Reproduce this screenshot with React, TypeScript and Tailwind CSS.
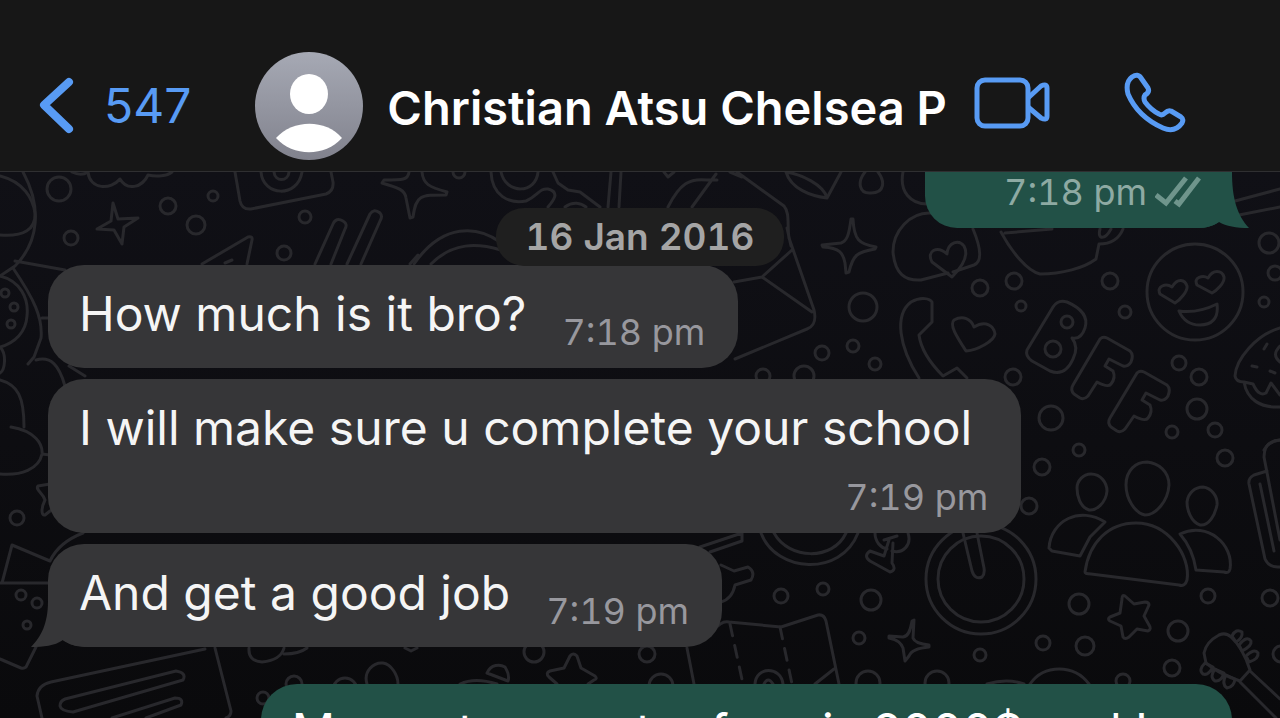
import type { ReactNode } from 'react';
import clsx from 'clsx';

// x, y, radius
const bubbles: [number, number, number][] = [
  [59, 189, 12], [168, 206, 8], [213, 196, 5], [196, 225, 9], [305, 217, 6], [284, 253, 7], [71, 238, 7],
  [459, 172, 6], [863, 307, 14], [822, 353, 7], [853, 346, 6], [875, 364, 6], [804, 376, 10], [763, 376, 7],
  [980, 288, 8], [1014, 281, 8], [1021, 306, 5], [1013, 377, 8], [1110, 281, 8], [1125, 312, 6],
  [1269, 243, 10], [1275, 273, 7], [1264, 302, 5], [1179, 363, 7], [1199, 377, 8], [1051, 418, 12],
  [1197, 409, 10], [1172, 432, 6], [1215, 430, 7], [1079, 450, 6], [1042, 467, 8], [1225, 458, 8],
  [1029, 506, 8], [1079, 604, 10], [1043, 643, 7], [1085, 646, 9], [1208, 596, 7], [1270, 598, 8],
  [1178, 631, 10], [1172, 668, 8], [1281, 654, 8], [1123, 681, 7], [781, 596, 7], [823, 589, 6],
  [871, 600, 10], [859, 638, 6], [980, 655, 6], [868, 683, 12], [937, 683, 12], [17, 518, 7],
  [21, 595, 5], [37, 603, 5], [27, 625, 4], [5, 293, 4], [14, 307, 4], [11, 324, 4],
  [534, 652, 10], [647, 654, 8], [661, 686, 12], [345, 690, 12], [294, 684, 8], [263, 698, 6],
  // clock rims
  [981, 579, 55], [981, 579, 43],
];

const doodles = [
  // planet and pine branches
  'M0 176C24 182 33 199 35 213C36 229 24 237 0 235',
  'M23 172C42 207 39 242 15 266L0 276M15 261L65 270M13 268C34 299 43 318 41 338L34 357L28 364M36 360C51 356 59 365 65 386M42 318H50M69 366L85 376',
  'M0 276C20 281 29 298 27 316C26 332 15 343 0 347M0 347C7 354 5 370 0 373M0 380C18 385 24 397 24 427M11 427C35 431 43 444 42 454C39 469 21 476 0 474M42 454L50 455',
  'M50 484L38 486C35 490 43 493 45 500C41 508 41 516 45 515L50 511M50 561L12 545L2 583M0 583H48M50 561C57 546 70 538 83 533',
  // cloud
  'M72 172C80 176 85 174 88 172C90 190 111 190 120 179C127 191 142 188 148 175C157 177 167 176 172 172',
  // camera
  'M235 172L240 201Q242 210 251 209L326 194Q334 191 333 182L331 172M261 172C263 197 298 198 302 172M274 172C275 182 288 182 289 172',
  // sparkles
  'M113 203L118 219L138 218L124 227L122 244L114 230L97 229L111 221Z',
  'M409 172C408 180 403 180 384 180L382 183C399 188 405 190 406 198L410 218L413 217C416 195 420 195 446 195L447 192C429 187 423 184 422 172',
  'M851 219C849 235 847 241 841 243L822 245L823 247C840 248 843 253 845 263L846 273L849 272C853 255 857 252 875 249L876 247C859 244 854 240 853 219Z',
  'M914 620L913 638C914 641 919 644 929 645V647C916 648 911 651 909 656L905 661L903 648C901 643 898 640 889 638V636L903 637C910 636 911 626 912 621Z',
  // pizza slice
  'M202 264L248 237Q253 236 252 240L247 264M225 263L232 260',
  // drum sticks
  'M315 264L333 224Q336 217 343 221Q348 224 345 229L331 264M347 264L370 214Q374 208 380 213Q383 216 380 221L361 264M410 264L418 255',
  // headphones and jigsaw
  'M414 264C443 222 478 226 500 242M431 264C453 242 477 243 501 250',
  'M491 172C492 196 509 204 526 201C538 196 539 188 548 189C560 192 554 200 548 207M501 172C506 195 536 194 538 172M553 172L558 183L568 190L580 192L600 207M565 207C573 201 581 203 586 207M611 172L608 207M621 172L619 207M664 172L668 177L674 172',
  // envelope
  'M668 207C680 183 690 178 707 180H717M692 207L716 174M737 172L784 206C790 213 787 225 789 238L814 310C817 323 812 327 807 329L735 359M792 250L762 277L734 282M762 277L812 312M791 246L787 228M730 172L742 177',
  // leaf and drop
  'M786 172C791 189 811 196 827 198C824 185 801 174 786 172ZM827 198L841 172M865 172C857 182 859 194 871 193C885 193 885 181 878 172M903 172C899 192 911 204 927 204',
  // cake with a heart
  'M931 213C910 212 893 231 893 252C895 274 905 281 921 280L948 273M973 229C983 253 981 262 974 265L953 272',
  'M952 277L932 262C926 251 937 245 947 254C948 242 959 239 964 246C970 257 960 269 952 277Z',
  // mug
  'M1001 232C1011 251 1027 271 1040 274C1062 274 1084 268 1096 259L1099 244C1111 244 1119 239 1123 229M1005 233L1052 229M1100 229C1097 240 1105 240 1111 229M1235 201L1280 189M1234 216L1280 207',
  // phone handset
  'M932 302V322L919 335C921 350 932 365 943 376L957 368L967 378M919 378C899 347 894 315 911 302C922 296 930 299 932 302',
  'M966 351C957 337 949 325 954 320C963 315 971 319 974 327C986 320 994 326 995 334C994 341 978 350 966 351Z',
  // smiling face
  'M1147 292A48 48 0 1 0 1243 292A48 48 0 1 0 1147 292M1175 303L1160 294C1156 286 1166 283 1172 287C1178 277 1185 280 1187 286C1188 291 1180 300 1175 303ZM1212 293L1197 285C1193 277 1203 275 1208 278C1213 269 1222 270 1224 277C1225 283 1216 291 1212 293ZM1179 311C1194 313 1207 309 1217 304C1219 319 1211 325 1200 325C1188 325 1182 318 1179 311Z',
  // balloons
  'M1053 307Q1058 299 1067 302Q1090 312 1085 328Q1081 340 1072 338Q1079 347 1073 359Q1065 377 1050 371L1032 361Q1025 356 1027 350ZM1061 322A6 6 0 1 0 1073 322A6 6 0 1 0 1061 322M1045 349A8 8 0 1 0 1061 349A8 8 0 1 0 1045 349',
  'M1100 339Q1103 336 1107 338L1130 351Q1134 355 1131 362Q1128 367 1123 366L1109 359L1105 366L1113 371Q1116 378 1111 384Q1108 388 1097 382L1088 396Q1084 400 1080 398L1074 394Q1070 390 1073 385Z',
  'M1137 373Q1140 370 1144 372L1167 385Q1171 389 1168 396Q1165 401 1160 400L1146 393L1142 400L1150 405Q1153 412 1148 418Q1145 422 1134 416L1125 429Q1121 433 1117 431L1111 427Q1107 423 1110 418Z',
  // doughnut
  'M1280 328C1256 335 1236 359 1235 376Q1236 382 1244 382C1247 400 1261 408 1280 407M1244 382L1253 384Q1259 397 1266 393L1271 383L1280 395M1280 346Q1271 355 1280 362M1264 349L1267 344M1252 366L1257 367M1270 371L1275 373M1264 450Q1269 441 1280 440',
  // group of people
  'M1147 462C1158 463 1169 471 1169 485C1168 501 1156 515 1145 515C1135 513 1126 499 1126 485C1126 470 1136 462 1147 462ZM1091 474C1101 474 1107 483 1107 491C1106 503 1096 511 1089 510C1080 507 1077 496 1077 488C1077 481 1083 474 1091 474ZM1203 487C1211 488 1218 496 1217 505C1215 515 1209 526 1200 525C1191 522 1187 510 1187 502C1188 493 1195 487 1203 487Z',
  'M1085 572C1089 542 1109 523 1136 523C1168 523 1191 556 1187 580Q1185 587 1179 585L1091 574Q1085 574 1085 572ZM1049 548C1051 520 1080 506 1105 522L1090 537L1080 556L1052 551ZM1180 534C1208 521 1234 545 1230 569Q1229 574 1224 572L1196 570Q1193 549 1180 534Z',
  // five pointed stars
  'M1125 596Q1122 594 1122 599L1120 613L1110 617Q1107 619 1110 621L1121 626L1123 637Q1125 640 1129 637L1137 629L1148 631Q1152 629 1149 625L1144 616L1149 605Q1149 602 1145 602L1134 604Z',
  'M570 656L564 668L550 671Q545 673 549 677L557 684M577 656L581 668L595 676Q598 679 594 680L588 684M570 656Q573 652 577 656',
  // luggage on the right edge
  'M1280 440Q1264 441 1264 457L1280 540M1267 471L1254 475Q1248 478 1249 484L1265 559Q1269 568 1280 567M1260 484L1274 551',
  // clock hand and wheel
  'M963 533L972 571Q975 580 982 577Q985 574 984 568L977 533M761 533C776 573 841 577 858 533M774 533C789 560 833 561 846 533',
  // dumbbell and hand
  'M875 533C875 542 881 548 887 549M908 533C912 545 903 554 892 551M889 540L884 556L870 551Q863 556 870 561L890 572Q897 570 892 563L893 543M897 536L884 540M721 565L734 571L748 567Q756 572 751 580L735 585C733 595 728 600 721 602M700 547L742 533V541L710 552',
  // map
  'M714 630Q722 620 729 622L781 627L818 615Q824 614 826 621L839 684M687 648L694 684M815 684L834 669M755 684C756 666 781 666 783 684M764 684Q768 676 773 684',
  // speech bubble with text lines
  'M0 659L21 668Q26 669 27 665L36 647M42 718L37 696Q38 685 51 682L205 649M215 648L231 711Q231 716 226 718M65 699L176 671Q187 673 183 680L73 712Q61 711 60 706Q60 701 65 699ZM112 718L175 698Q184 698 181 705L146 718',
  'M249 648Q248 661 262 662Q281 660 284 648M284 654Q299 654 307 648M367 684C363 671 374 662 383 663C391 664 398 675 398 684M460 684Q475 677 497 684M487 673C491 664 500 664 505 667Q510 675 508 681ZM405 648L411 651L417 648',
  // guitar head
  'M1204 653Q1206 642 1219 635Q1226 632 1231 637Q1243 648 1250 670L1240 681Q1219 674 1206 663ZM1250 671L1280 699M1240 682L1276 718',
  'M1232 636Q1236 628 1242 632Q1243 638 1236 642ZM1239 645Q1247 635 1251 641Q1252 646 1242 651ZM1246 656Q1254 648 1258 653Q1259 659 1249 662ZM1205 663Q1198 670 1203 674Q1208 676 1213 667ZM1215 669Q1209 677 1215 681Q1221 682 1224 673ZM1226 675Q1221 684 1227 688Q1234 687 1235 679Z',
  'M987 684Q1007 678 1024 684M1030 684C1044 664 1074 664 1089 684',
];

function Wallpaper() {
  return (
    <svg
      className="absolute inset-0 h-full w-full"
      viewBox="0 172 1280 546"
      preserveAspectRatio="xMidYMin slice"
      fill="none"
      stroke="#28282c"
      strokeWidth="3"
      strokeLinejoin="round"
      strokeLinecap="round"
      aria-hidden="true"
    >
      {doodles.map((d) => (
        <path key={d} d={d} />
      ))}
      {bubbles.map(([x, y, r]) => (
        <circle key={`${x}-${y}-${r}`} cx={x} cy={y} r={r} />
      ))}
      <path d="M730 624L743 684M780 627L792 684" strokeDasharray="12 10" />
    </svg>
  );
}

function Avatar() {
  return (
    <svg className="size-[108px] shrink-0" viewBox="0 0 108 108" aria-hidden="true">
      <defs>
        <linearGradient id="avatar" x1="0" y1="0" x2="0" y2="1">
          <stop offset="0" stopColor="#a6a9b4" />
          <stop offset="1" stopColor="#81828d" />
        </linearGradient>
      </defs>
      <circle cx="54" cy="54" r="54" fill="url(#avatar)" />
      <ellipse cx="54" cy="42" rx="19" ry="20" fill="#fff" />
      <path d="M21 86C38 67 71 67 87 86C70 105 38 105 21 86Z" fill="#fff" />
    </svg>
  );
}

function Header() {
  return (
    <header className="flex shrink-0 items-center border-b border-[#2f2f31] bg-[#171717] pt-[52px] pr-[94px] pb-[11px] pl-[38px]">
      <button type="button" className="mr-16 flex items-center gap-[30px] text-[48px] leading-none text-[#589bf4]">
        <svg className="h-[58px] w-9" viewBox="0 0 36 58" fill="none" stroke="currentColor" strokeWidth="8" strokeLinecap="round" strokeLinejoin="round" aria-hidden="true">
          <path d="M31 5L6 28L31 52" />
        </svg>
        547
      </button>
      <Avatar />
      <h1 className="ml-6 min-w-0 flex-1 overflow-hidden pt-1 text-[47px] leading-[56px] font-semibold whitespace-nowrap text-white">
        Christian Atsu Chelsea P
      </h1>
      <div className="flex items-center gap-[72px] pb-1.5 text-[#589bf4]">
        <button type="button" aria-label="Video call">
          <svg className="h-[54px] w-[78px]" viewBox="974 76 78 54" fill="none" stroke="currentColor" strokeWidth="5" strokeLinejoin="round" aria-hidden="true">
            <rect x="977" y="80" width="51" height="46" rx="8" />
            <path d="M1028 98L1041 86Q1047 83 1047 88V116Q1047 121 1041 118L1028 107" />
          </svg>
        </button>
        <button type="button" aria-label="Call">
          <svg className="h-[62px] w-[62px]" viewBox="1124 72 62 62" fill="none" stroke="currentColor" strokeWidth="5" strokeLinejoin="round" aria-hidden="true">
            <path d="M1132 77Q1138 73 1141 78L1148 88Q1150 92 1145 95Q1143 98 1145 102Q1151 110 1159 114Q1162 116 1165 113Q1168 110 1171 111L1181 117Q1184 119 1182 123C1177 130 1170 131 1163 128C1145 120 1134 108 1128 94C1126 86 1128 80 1132 77Z" />
          </svg>
        </button>
      </div>
    </header>
  );
}

function Time({ children }: { children: ReactNode }) {
  return <time className="relative text-[36px] leading-[40px] whitespace-nowrap tabular-nums">{children}</time>;
}

interface IncomingProps {
  text: string;
  time: string;
  stacked?: boolean;
  tail?: boolean;
}

function Incoming({ text, time, stacked, tail }: IncomingProps) {
  return (
    <li
      className={clsx(
        'relative flex self-start rounded-[36px] bg-[#363638] pt-5 pr-[33px] pb-4 pl-[31px]',
        stacked ? 'flex-col' : 'items-end gap-9',
      )}
    >
      {tail && (
        <svg className="absolute bottom-0 -left-[17px] h-[46px] w-[62px]" viewBox="0 0 62 46" fill="#363638" aria-hidden="true">
          <path d="M17 0C17 23 10 36 0 46C13 46 23 45 32 39C39 44 47 46 62 46V0Z" />
        </svg>
      )}
      <p className={clsx('relative text-[48px] leading-[58px] whitespace-nowrap text-[#f5f5f5]', stacked ? 'mr-4' : 'mb-[9px]')}>{text}</p>
      <span className={clsx('flex text-[#98989e]', stacked && 'mt-5 self-end')}>
        <Time>{time}</Time>
      </span>
    </li>
  );
}

export default function App() {
  return (
    <div className="flex h-screen flex-col overflow-hidden bg-[#171717] font-['Inter','Liberation_Sans',sans-serif]">
      <Header />
      <main className="relative min-h-0 flex-1 overflow-hidden bg-linear-to-b from-[#101016] to-[#0a0a0c]">
        <Wallpaper />
        <ul className="relative flex flex-col gap-[11px] pr-12 pl-12">
          <li className="relative flex items-center gap-2 self-end rounded-b-[32px] bg-[#225147] pr-[31px] pb-4 pl-[79px] text-[#8eaaa3]">
            <svg className="absolute -right-[17px] bottom-0 h-14 w-[50px]" viewBox="0 0 50 56" fill="#225147" aria-hidden="true">
              <path d="M33 0C33 26 38 43 50 56C37 56 27 54 20 50C14 54 7 56 0 56V0Z" />
            </svg>
            <Time>7:18 pm</Time>
            <svg className="relative h-8 w-[46px]" viewBox="0 0 46 32" fill="none" stroke="#6f958c" strokeWidth="5" aria-label="Delivered">
              <path d="M1 19L11 27L31 2M20 25L24 28L44 2" />
            </svg>
          </li>
          <li className="relative z-10 -mt-[31px] -mb-3 self-center rounded-[28px] bg-[#1f1f1f] px-[30px] py-2 text-[37px] leading-[42px] font-semibold text-[#a5a5a5] tabular-nums">
            16 Jan 2016
          </li>
          <Incoming text="How much is it bro?" time="7:18 pm" />
          <Incoming text="I will make sure u complete your school" time="7:19 pm" stacked />
          <Incoming text="And get a good job" time="7:19 pm" tail />
          <li className="mt-[26px] self-end rounded-[36px] bg-[#225147] pt-[18px] pr-[84px] pb-4 pl-[31px] text-[48px] leading-[58px] whitespace-nowrap text-white">
            My next semester fees is 2000$ and I
          </li>
        </ul>
      </main>
    </div>
  );
}
